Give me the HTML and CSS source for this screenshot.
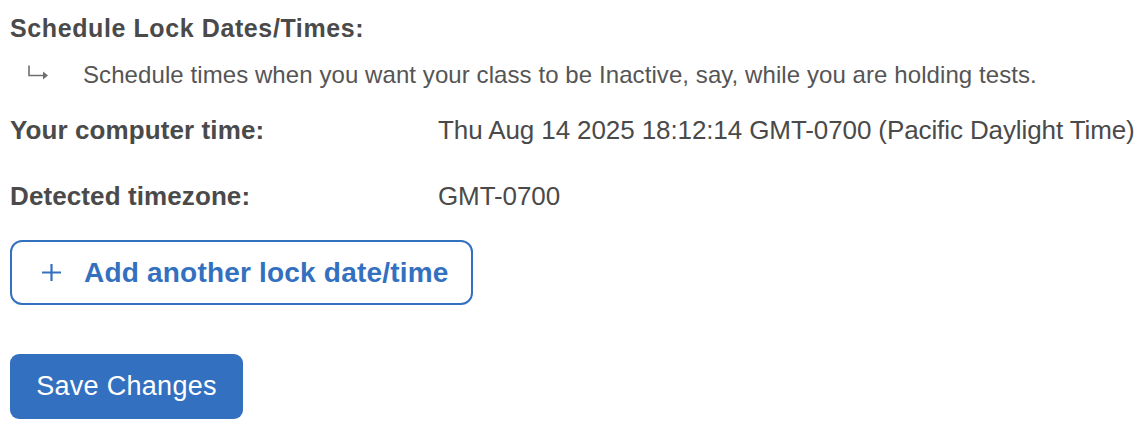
FILE: index.html
```html
<!DOCTYPE html>
<html>
<head>
<meta charset="utf-8">
<link rel="stylesheet" href="styles.css">
</head>
<body>
<div class="page">
  <h3 class="heading">Schedule Lock Dates/Times:</h3>
  <div class="hint">
    <span class="arrow"><svg width="22" height="16" viewBox="0 0 22 16"><path d="M1 0.5V10.5H16" stroke="#6f6f6f" stroke-width="1.6" fill="none"/><path d="M15 6.5L20 10.5L15 14.5Z" fill="#6f6f6f"/></svg></span>
    <span class="hint-text">Schedule times when you want your class to be Inactive, say, while you are holding tests.</span>
  </div>
  <div class="row"><span class="label">Your computer time:</span><span class="value">Thu Aug 14 2025 18:12:14 GMT-0700 (Pacific Daylight Time)</span></div>
  <div class="row row-tz"><span class="label">Detected timezone:</span><span class="value">GMT-0700</span></div>
  <button class="add-btn"><svg class="plus" width="21" height="19" viewBox="0 0 21 19"><path d="M10.5 1V18M1 9.5H20" stroke="currentColor" stroke-width="2.2" fill="none"/></svg><span>Add another lock date/time</span></button>
  <button class="save-btn">Save Changes</button>
</div>
</body>
</html>
```
FILE: styles.css
```css
html, body { margin: 0; padding: 0; background: #fff; }
body { font-family: "Liberation Sans", Arial, sans-serif; color: #4a4a4a; }
.page { padding: 13px 10px 0 10px; display: flex; flex-direction: column; align-items: flex-start; }
.heading { margin: 0; font-size: 25px; font-weight: bold; line-height: 30px; letter-spacing: 0.6px; }
.hint { display: flex; align-items: center; margin-top: 17px; font-size: 24px; line-height: 30px; color: #555; }
.hint-text { letter-spacing: 0.08px; }
.arrow { width: 73px; padding-left: 18px; box-sizing: border-box; display: flex; align-items: center; padding-bottom: 4px; }
.row { display: flex; align-items: baseline; line-height: 30px; margin-top: 25px; }
.row-tz { margin-top: 36px; }
.label { width: 428px; font-weight: bold; font-size: 26px; letter-spacing: 0.1px; }
.value { font-size: 26px; letter-spacing: -0.1px; }
.add-btn { margin-top: 29px; width: 463px; height: 65px; box-sizing: border-box; border: 2px solid #3470c0; border-radius: 12px; background: #fff; color: #3470c0; font-family: inherit; font-size: 28px; font-weight: bold; display: flex; align-items: center; padding: 0 0 0 29px; cursor: pointer; letter-spacing: 0.2px; }
.plus { margin-right: 22px; flex: none; }
.save-btn { margin-top: 49px; width: 233px; height: 65px; border: none; border-radius: 9px; background: #3470c0; color: #fff; font-family: inherit; font-size: 27px; padding: 0; cursor: pointer; letter-spacing: 0.3px; }
```
